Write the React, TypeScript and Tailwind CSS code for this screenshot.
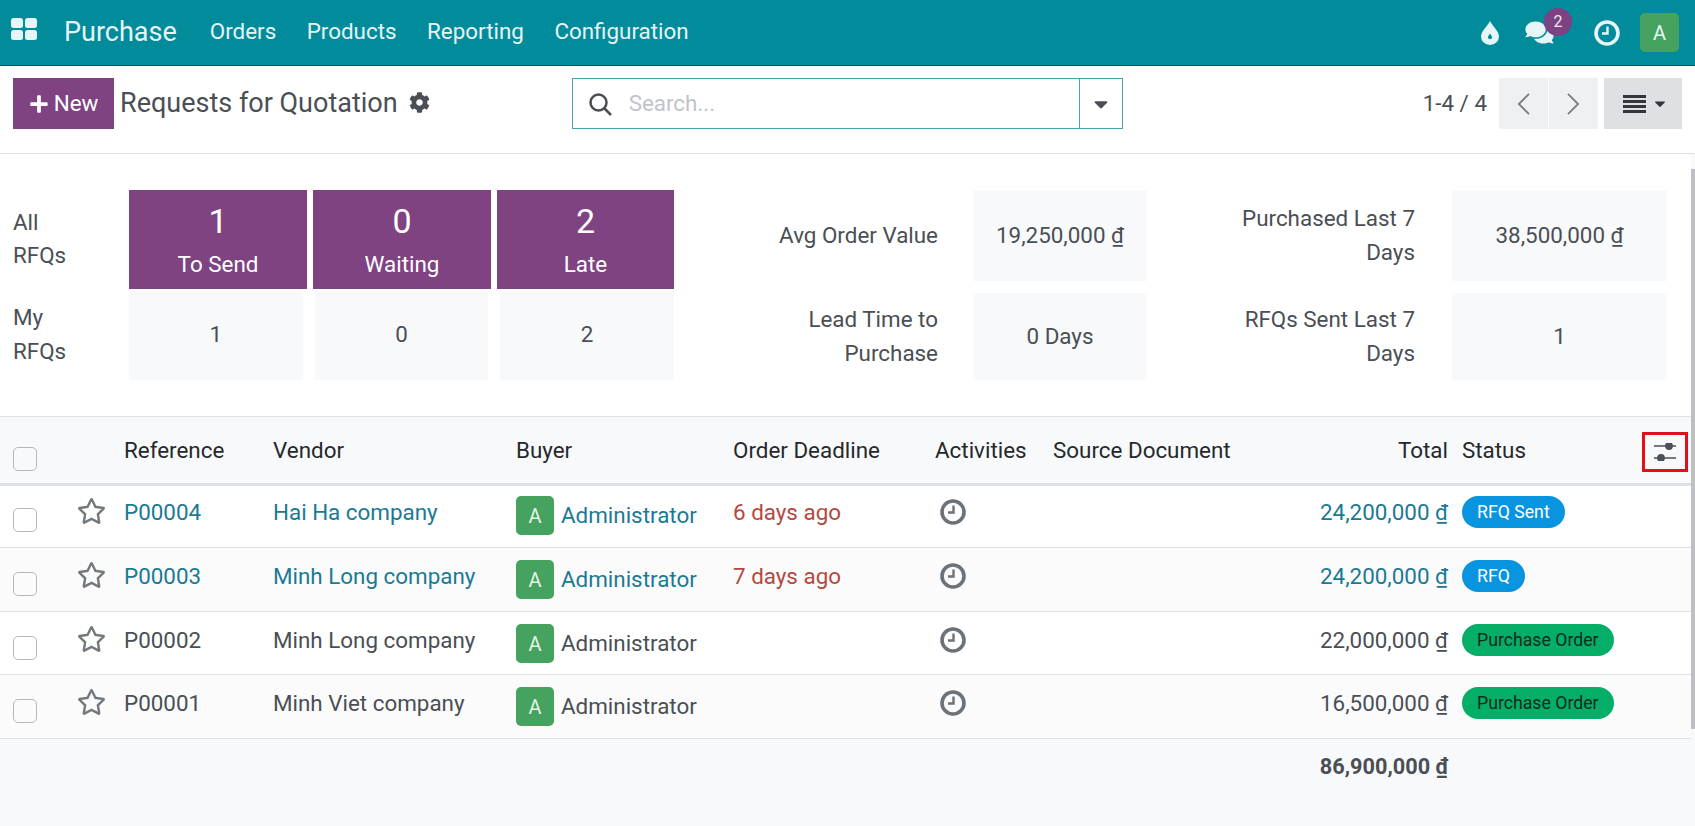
import React from 'react';
import { FaCaretDown, FaCog, FaComments, FaPlus, FaRegStar } from 'react-icons/fa';

const rows = [
  {
    ref: 'P00004', vendor: 'Hai Ha company', deadline: '6 days ago', total: '24,200,000 ₫', link: true,
    status: 'RFQ Sent', badge: 'bg-[#0994e0] text-white',
    top: 'pt-[11px]', avatarTop: 'pt-[10px]', height: 'h-[62px]',
  },
  {
    ref: 'P00003', vendor: 'Minh Long company', deadline: '7 days ago', total: '24,200,000 ₫', link: true,
    status: 'RFQ', badge: 'bg-[#0994e0] text-white',
    top: 'pt-[13px]', avatarTop: 'pt-[12px]', height: 'h-[64px]', striped: true,
  },
  {
    ref: 'P00002', vendor: 'Minh Long company', deadline: '', total: '22,000,000 ₫', link: false,
    status: 'Purchase Order', badge: 'bg-[#05ae66] text-[#0d2c1e]',
    top: 'pt-[13px]', avatarTop: 'pt-[12px]', height: 'h-[63px]',
  },
  {
    ref: 'P00001', vendor: 'Minh Viet company', deadline: '', total: '16,500,000 ₫', link: false,
    status: 'Purchase Order', badge: 'bg-[#05ae66] text-[#0d2c1e]',
    top: 'pt-[13px]', avatarTop: 'pt-[12px]', height: 'h-[64px]', striped: true,
  },
];

function Clock({ className }: { className: string }) {
  return (
    <svg viewBox="0 0 26 26" className={className} fill="none" stroke="currentColor">
      <circle cx="13" cy="13" r="11" strokeWidth="3.600" />
      <path d="M13.500 6.500v7H8" strokeWidth="2.400" />
    </svg>
  );
}

function Checkbox() {
  return <div className="h-6 w-6 rounded-[5px] border border-[#b4b8bc]" />;
}

function Avatar() {
  return (
    <div className="flex h-[39px] w-[38px] shrink-0 items-center justify-center rounded-[5px] bg-[#45a25f] text-[20px] text-[#e3f3e7]">
      A
    </div>
  );
}

function KpiCell({ top, label }: { top: string; label: string }) {
  return (
    <div className="flex h-[99px] flex-col items-center bg-[#7f4382] pt-[11px] text-white">
      <span className="text-[34px] leading-[40px]">{top}</span>
      <span className="mt-[9px] text-[22.4px] leading-[28px]">{label}</span>
    </div>
  );
}

export default function App() {
  return (
    <div className="flex h-screen w-full flex-col overflow-hidden bg-white font-['Roboto',sans-serif] text-[22.4px] text-[#4a4f55]">
      <nav className="flex h-[66px] shrink-0 items-center border-b border-[#05505a] bg-[#018b9b] text-[#e6f5f6]">
        <svg viewBox="0 0 26 22" className="mb-[8px] ml-[11px] h-[22px] w-[26px]" fill="currentColor">
          <rect x="0" y="0" width="12" height="10" rx="2.5" />
          <rect x="14" y="0" width="12" height="10" rx="2.5" />
          <rect x="0" y="12" width="12" height="10" rx="2.5" />
          <rect x="14" y="12" width="12" height="10" rx="2.5" />
        </svg>
        <span className="ml-[27px] text-[27px]">Purchase</span>
        <div className="mb-[2px] ml-[33px] flex gap-[30.5px] text-[22.4px]">
          <span>Orders</span>
          <span>Products</span>
          <span>Reporting</span>
          <span>Configuration</span>
        </div>
        <div className="ml-auto mr-[16px] flex items-center">
          <svg viewBox="0 0 18 24" className="h-[24px] w-[18px]" fill="currentColor">
            <path fillRule="evenodd" d="M9 0c1.500 4 9 10 9 15.500a9 8.500 0 0 1-18 0C0 10 7.500 4 9 0zM9 12.500c-.8 1.300-2 2.500-2 3.700a2 2 0 0 0 4 0c0-1.200-1.200-2.400-2-3.700z" />
          </svg>
          <div className="relative ml-[25px] h-[25px] w-[29px]">
            <FaComments className="h-[25px] w-[31px]" />
            <span className="absolute -top-[12px] left-[20px] flex h-[28px] w-[28px] items-center justify-center rounded-full bg-[#7c4284] text-[16px] text-[#f0e6f0]">
              2
            </span>
          </div>
          <Clock className="ml-[41px] h-[26px] w-[26px]" />
          <div className="ml-[20px] flex h-[39px] w-[39px] items-center justify-center rounded-[5px] bg-[#45a25f] text-[20px]">
            A
          </div>
        </div>
      </nav>

      <div className="flex h-[88px] shrink-0 items-start border-b border-[#dee2e6] pt-[12px]">
        <button className="ml-[13px] flex h-[51px] w-[101px] items-center justify-center gap-[5px] bg-[#7f4382] text-[22.4px] text-white">
          <FaPlus className="h-[20px] w-[20px]" />
          New
        </button>
        <h1 className="ml-[6px] text-[27px] leading-[50px]">Requests for Quotation</h1>
        <FaCog className="ml-[11px] mt-[14px] h-[21px] w-[21px]" />
        <div className="ml-[142px] flex h-[51px] w-[551px] border border-[#4ba3ac]">
          <div className="flex flex-1 items-center border-r border-[#4ba3ac]">
            <svg viewBox="0 0 24 24" className="ml-[15px] h-[24px] w-[24px]" fill="none" stroke="currentColor" strokeWidth="2.500">
              <circle cx="10.500" cy="10.500" r="8" />
              <path d="M16.500 16.500L23 23" />
            </svg>
            <span className="ml-[17px] text-[#c0c4ca]">Search...</span>
          </div>
          <div className="flex w-[42px] items-center justify-center">
            <FaCaretDown className="h-[22px] w-[22px]" />
          </div>
        </div>
        <span className="ml-auto leading-[50px]">1-4 / 4</span>
        <div className="ml-[12px] flex gap-px">
          <div className="flex h-[51px] w-[49px] items-center justify-center bg-[#eff0f2]">
            <svg viewBox="0 0 16 26" className="h-[24px] w-[15px]" fill="none" stroke="#7b7e82" strokeWidth="2">
              <path d="M14 2L3 13l11 11" />
            </svg>
          </div>
          <div className="flex h-[51px] w-[49px] items-center justify-center bg-[#eff0f2]">
            <svg viewBox="0 0 16 26" className="h-[24px] w-[15px]" fill="none" stroke="#7b7e82" strokeWidth="2">
              <path d="M2 2l11 11L2 24" />
            </svg>
          </div>
        </div>
        <div className="ml-[6px] mr-[13px] flex h-[51px] w-[78px] items-center justify-center gap-[7px] bg-[#dee0e4] pl-[3px] text-[#33373b]">
          <svg viewBox="0 0 23 18" className="h-[18px] w-[23px]" fill="currentColor">
            <rect y="0" width="23" height="3" />
            <rect y="5" width="23" height="3" />
            <rect y="10" width="23" height="3" />
            <rect y="15" width="23" height="3" />
          </svg>
          <FaCaretDown className="h-[17px] w-[14px]" />
        </div>
      </div>

      <div className="flex min-h-0 flex-1">
        <main className="min-w-0 flex-1 bg-[#f8f9fa]">
          <section className="flex h-[262px] bg-white pl-[13px] pt-[36px]">
            <div className="w-[661px]">
              <div className="flex">
                <div className="w-[116px] pt-[16px] leading-[33px]">All<br />RFQs</div>
                <div className="grid flex-1 grid-cols-[178px_178px_177px] gap-[6px]">
                  <KpiCell top="1" label="To Send" />
                  <KpiCell top="0" label="Waiting" />
                  <KpiCell top="2" label="Late" />
                </div>
              </div>
              <div className="mt-[2px] flex">
                <div className="w-[116px] pt-[9px] leading-[34px]">My<br />RFQs</div>
                <div className="grid h-[89px] flex-1 grid-cols-3 gap-[12px]">
                  <div className="flex items-center justify-center bg-[#f8f9fa] pb-[2px]">1</div>
                  <div className="flex items-center justify-center bg-[#f8f9fa] pb-[2px]">0</div>
                  <div className="flex items-center justify-center bg-[#f8f9fa] pb-[2px]">2</div>
                </div>
              </div>
            </div>
            <div className="ml-[26px] grid h-[190px] w-[448px] grid-cols-[238px_174px] grid-rows-[91px_87px] gap-x-[35px] gap-y-[12px] leading-[34px]">
              <div className="flex items-center justify-end pb-[2px] text-right">Avg Order Value</div>
              <div className="flex items-center justify-center bg-[#f8f9fa] pb-[2px]">19,250,000 ₫</div>
              <div className="flex items-center justify-end pb-[2px] text-right">Lead Time to<br />Purchase</div>
              <div className="flex items-center justify-center bg-[#f8f9fa] pb-[2px]">0 Days</div>
            </div>
            <div className="ml-[22px] grid h-[190px] w-[497px] grid-cols-[245px_215px] grid-rows-[91px_87px] gap-x-[37px] gap-y-[12px] leading-[34px]">
              <div className="flex items-center justify-end pb-[2px] text-right">Purchased Last 7<br />Days</div>
              <div className="flex items-center justify-center bg-[#f8f9fa] pb-[2px]">38,500,000 ₫</div>
              <div className="flex items-center justify-end pb-[2px] text-right">RFQs Sent Last 7<br />Days</div>
              <div className="flex items-center justify-center bg-[#f8f9fa] pb-[2px]">1</div>
            </div>
          </section>

          <table className="w-full table-fixed border-separate border-spacing-0 leading-[30px]">
            <colgroup>
              <col className="w-[64px]" />
              <col className="w-[60px]" />
              <col className="w-[149px]" />
              <col className="w-[243px]" />
              <col className="w-[217px]" />
              <col className="w-[202px]" />
              <col className="w-[118px]" />
              <col className="w-[217px]" />
              <col className="w-[192px]" />
              <col />
            </colgroup>
            <thead>
              <tr className="h-[70px] font-normal text-[#25292d]">
                <th className="border-y border-b-[3px] border-[#dee2e6] pl-[13px] pt-[18px] text-left font-normal"><Checkbox /></th>
                <th className="border-y border-b-[3px] border-[#dee2e6]" />
                <th className="border-y border-b-[3px] border-[#dee2e6] text-left font-normal">Reference</th>
                <th className="border-y border-b-[3px] border-[#dee2e6] text-left font-normal">Vendor</th>
                <th className="border-y border-b-[3px] border-[#dee2e6] text-left font-normal">Buyer</th>
                <th className="border-y border-b-[3px] border-[#dee2e6] text-left font-normal">Order Deadline</th>
                <th className="border-y border-b-[3px] border-[#dee2e6] text-left font-normal">Activities</th>
                <th className="border-y border-b-[3px] border-[#dee2e6] text-left font-normal">Source Document</th>
                <th className="border-y border-b-[3px] border-[#dee2e6] pr-[14px] text-right font-normal">Total</th>
                <th className="border-y border-b-[3px] border-[#dee2e6] pr-[3px] text-left font-normal">
                  <div className="flex items-center justify-between">
                    <span>Status</span>
                    <div className="mt-[4px] flex h-[40px] w-[46px] items-center justify-center border-[3px] border-[#e3101c]">
                      <svg viewBox="0 0 24 18" className="h-[18px] w-[24px] text-[#495057]">
                        <path d="M1 3h22M1 15h22" stroke="currentColor" strokeWidth="1.500" />
                        <circle cx="16" cy="3" r="3.900" fill="currentColor" />
                        <circle cx="8" cy="15" r="3.900" fill="currentColor" />
                      </svg>
                    </div>
                  </div>
                </th>
              </tr>
            </thead>
            <tbody>
              {rows.map((row) => {
                const linkColor = row.link ? 'text-[#1b7a93]' : '';
                return (
                  <tr key={row.ref} className={`${row.height} ${row.striped ? 'bg-[#fbfbfc]' : 'bg-white'}`}>
                    <td className={`border-b border-[#dee2e6] pl-[13px] align-top ${row.top}`}>
                      <div className="mt-[11px]"><Checkbox /></div>
                    </td>
                    <td className={`border-b border-[#dee2e6] pl-[13px] align-top ${row.top}`}>
                      <FaRegStar className="h-[28px] w-[29px] text-[#73787d]" />
                    </td>
                    <td className={`border-b border-[#dee2e6] align-top ${row.top} ${linkColor}`}>{row.ref}</td>
                    <td className={`border-b border-[#dee2e6] align-top ${row.top} ${linkColor}`}>{row.vendor}</td>
                    <td className={`border-b border-[#dee2e6] align-top ${row.avatarTop} ${linkColor}`}>
                      <div className="flex items-center gap-[7px]">
                        <Avatar />
                        <span className="mb-[2px]">Administrator</span>
                      </div>
                    </td>
                    <td className={`border-b border-[#dee2e6] align-top text-[#b5493f] ${row.top}`}>{row.deadline}</td>
                    <td className={`border-b border-[#dee2e6] pl-[5px] align-top ${row.top}`}>
                      <Clock className="mt-[2px] h-[26px] w-[26px] text-[#6c7278]" />
                    </td>
                    <td className="border-b border-[#dee2e6]" />
                    <td className={`border-b border-[#dee2e6] pr-[14px] text-right align-top ${row.top} ${linkColor}`}>{row.total}</td>
                    <td className={`border-b border-[#dee2e6] align-top ${row.avatarTop}`}>
                      <span className={`flex h-[32px] w-fit items-center rounded-full px-[15px] text-[17.7px] ${row.badge}`}>
                        {row.status}
                      </span>
                    </td>
                  </tr>
                );
              })}
            </tbody>
            <tfoot>
              <tr>
                <td colSpan={8} />
                <td className="pr-[14px] pt-[13px] text-right text-[21.7px] font-bold">86,900,000 ₫</td>
                <td />
              </tr>
            </tfoot>
          </table>
        </main>
        <div className="w-[4px] shrink-0 bg-[#f8f9fa] pt-[15px]">
          <div className="h-[560px] bg-[#bdbfc2]" />
        </div>
      </div>
    </div>
  );
}
